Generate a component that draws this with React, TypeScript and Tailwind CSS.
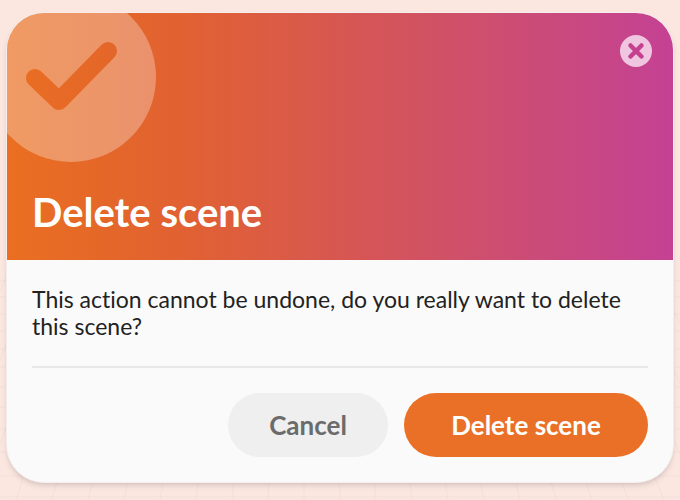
import React from 'react';

const verticalLines = Array.from({ length: 25 }, (_, i) => i - 11);
const horizontalLines = [281, 297, 314, 331, 349, 367, 387, 407, 429, 452, 476, 497];

/** Faint perspective grid behind the dialog */
const BackgroundGrid: React.FC = () => (
  <svg
    className="absolute inset-0 h-full w-full"
    viewBox="0 0 680 500"
    preserveAspectRatio="none"
    stroke="#e9d3cd"
    strokeOpacity="0.35"
    aria-hidden="true"
  >
    {verticalLines.map(i => (
      <line key={i} x1={304 + i * 26} y1="250" x2={304 + i * 36} y2="500" />
    ))}
    {horizontalLines.map(y => (
      <line key={y} x1="0" y1={y} x2="680" y2={y} />
    ))}
  </svg>
);

const CheckBadge: React.FC = () => (
  <svg className="absolute -top-5 -left-5" width="170" height="170" viewBox="0 0 170 170" aria-hidden="true">
    <defs>
      <mask id="check-cutout">
        <rect width="170" height="170" fill="white" />
        <path
          d="M48 85 L72 108 L121 58"
          fill="none"
          stroke="black"
          strokeWidth="18"
          strokeLinecap="round"
          strokeLinejoin="round"
        />
      </mask>
    </defs>
    <circle cx="84" cy="84" r="85" fill="white" fillOpacity="0.3" mask="url(#check-cutout)" />
  </svg>
);

const App: React.FC = () => {
  return (
    <main className="relative min-h-screen bg-[#fbe6e0] px-1.5 pt-3 pb-4 font-['Lato','Liberation_Sans',sans-serif] [font-variant-ligatures:none]">
      <BackgroundGrid />
      <section
        role="alertdialog"
        aria-labelledby="dialog-title"
        aria-describedby="dialog-text"
        className="relative overflow-hidden rounded-[38px] border border-[#f5eeec] bg-[#fafafa] shadow-md"
      >
        <header className="relative flex h-[247px] flex-col justify-between bg-[linear-gradient(to_right,#ea6f21_0%,#e46729_15%,#e16133_27%,#d65654_52%,#cd4e70_73%,#c44194_100%)] px-[25px] pt-[22px] pb-6">
          <CheckBadge />
          <button type="button" aria-label="Close" className="relative -mr-1 self-end">
            <svg width="32" height="32" viewBox="0 0 32 32">
              <circle cx="16" cy="16" r="16" fill="#efc5df" />
              <path d="M10.5 10.5 L21.5 21.5 M21.5 10.5 L10.5 21.5" stroke="#c54190" strokeWidth="4.5" strokeLinecap="round" />
            </svg>
          </button>
          <h1 id="dialog-title" className="relative text-[40px] leading-12 font-bold text-white">
            Delete scene
          </h1>
        </header>

        <div className="px-[25px] pt-[26px] pb-[25px]">
          <p id="dialog-text" className="text-[23px] leading-[27px] text-[#222222]">
            This action cannot be undone, do you really want to delete this scene?
          </p>
          <div className="mt-[26px] flex justify-end gap-4 border-t-2 border-[#e8e8e8] pt-[25px]">
            <button type="button" className="h-16 w-40 rounded-full bg-[#efefef] text-[26px] font-bold text-[#6b6b6b]">
              Cancel
            </button>
            <button type="button" className="h-16 w-[244px] rounded-full bg-[#eb7027] text-[26px] font-bold text-white">
              Delete scene
            </button>
          </div>
        </div>
      </section>
    </main>
  );
};

export default App;
